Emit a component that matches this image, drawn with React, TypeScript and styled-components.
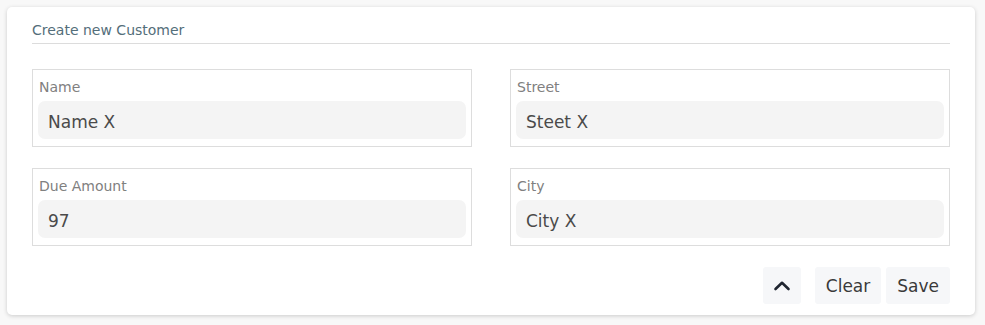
import React, { useState } from 'react'
import styled, { createGlobalStyle } from 'styled-components'

const GlobalStyle = createGlobalStyle`
  html, body {
    margin: 0;
    padding: 0;
    background: #f8f8f8;
  }
  body {
    font-family: 'DejaVu Sans', 'Open Sans', sans-serif;
  }
`

const Page = styled.div`
  padding: 7px 10px 10px 7px;
`

const Card = styled.div`
  background: #fff;
  border-radius: 5px;
  box-shadow: 0 1px 4px rgba(0, 0, 0, 0.18);
  padding: 14px 25px 12px 25px;
  height: 308px;
  box-sizing: border-box;
  display: flex;
  flex-direction: column;
`

const Title = styled.div`
  font-size: 14px;
  line-height: 18px;
  font-weight: 400;
  color: #546e7a;
  padding-bottom: 4px;
  border-bottom: 1px solid #dcdcdc;
`

const FormGrid = styled.div`
  display: grid;
  grid-template-columns: 1fr 1fr;
  column-gap: 38px;
  row-gap: 21px;
  margin-top: 25px;
`

const Field = styled.label`
  display: flex;
  flex-direction: column;
  border: 1px solid #dddddd;
  padding: 8px 5px 7px 5px;
`

const Label = styled.span`
  font-size: 14px;
  line-height: 18px;
  color: #808080;
  padding-left: 1px;
  margin-bottom: 5px;
`

const Input = styled.input`
  height: 38px;
  box-sizing: border-box;
  border: none;
  outline: none;
  border-radius: 7px;
  background: #f4f4f4;
  padding: 3px 10px 0 10px;
  font-family: inherit;
  font-size: 17px;
  color: #4a4a4a;
`

const Actions = styled.div`
  display: flex;
  justify-content: flex-end;
  align-items: center;
  margin-top: 21px;
`

const Button = styled.button<{ $square?: boolean; $gap?: number }>`
  height: 37px;
  min-width: ${({ $square }) => ($square ? '38px' : 'auto')};
  padding: ${({ $square }) => ($square ? '0' : '0 11px')};
  margin-left: ${({ $gap }) => $gap ?? 0}px;
  border: none;
  border-radius: 3px;
  background: #f6f7f9;
  font-family: inherit;
  font-size: 17px;
  color: #3a3a3a;
  display: flex;
  align-items: center;
  justify-content: center;
  cursor: pointer;
`

const ChevronUp = () => (
  <svg width="18" height="12" viewBox="0 0 18 12">
    <path d="M2.5 9 L9 2.8 L15.5 9" fill="none" stroke="#1f2530" strokeWidth="2.6" strokeLinecap="round" strokeLinejoin="round" />
  </svg>
)

export default function App() {
  const [form, setForm] = useState({ name: 'Name X', street: 'Steet X', due: '97', city: 'City X' })
  const set = (key: keyof typeof form) => (e: React.ChangeEvent<HTMLInputElement>) =>
    setForm({ ...form, [key]: e.target.value })

  return (
    <Page>
      <GlobalStyle />
      <Card>
        <Title>Create new Customer</Title>
        <FormGrid>
          <Field>
            <Label>Name</Label>
            <Input value={form.name} onChange={set('name')} />
          </Field>
          <Field>
            <Label>Street</Label>
            <Input value={form.street} onChange={set('street')} />
          </Field>
          <Field>
            <Label>Due Amount</Label>
            <Input value={form.due} onChange={set('due')} />
          </Field>
          <Field>
            <Label>City</Label>
            <Input value={form.city} onChange={set('city')} />
          </Field>
        </FormGrid>
        <Actions>
          <Button $square>
            <ChevronUp />
          </Button>
          <Button $gap={14}>Clear</Button>
          <Button $gap={5}>Save</Button>
        </Actions>
      </Card>
    </Page>
  )
}
